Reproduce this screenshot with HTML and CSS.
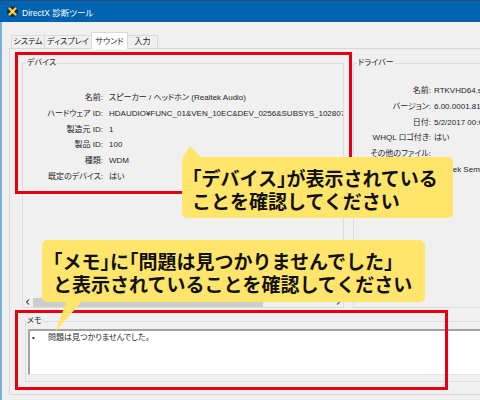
FILE: index.html
```html
<!DOCTYPE html>
<html lang="ja">
<head>
<meta charset="utf-8">
<title>DirectX 診断ツール</title>
<link rel="stylesheet" href="styles.css">
</head>
<body>
<div class="titlebar">
  <svg class="app-icon" width="11" height="11" viewBox="0 0 11 11">
    <circle cx="5.5" cy="5.5" r="5.5" fill="#1c2b63"/>
    <path d="M2.5 2.5 L8.5 8.5 M8.5 2.5 L2.5 8.5" stroke="#f3d21a" stroke-width="2.4" stroke-linecap="round"/>
    <circle cx="5.5" cy="5.5" r="1" fill="#fff6b0"/>
  </svg>
  <span class="title">DirectX 診断ツール</span>
</div>
<div class="client">
  <div class="tabs">
    <div class="tab w-sys">システム</div>
    <div class="tab w-disp">ディスプレイ</div>
    <div class="tab tab-active w-snd">サウンド</div>
    <div class="tab w-in">入力</div>
  </div>
  <div class="panel">
    <div class="top">
      <fieldset class="grp">
        <legend>デバイス</legend>
        <div class="grp-body">
          <div class="kv kv-dev">
            <span class="k">名前:</span><span class="v">スピーカー / ヘッドホン (Realtek Audio)</span>
            <span class="k">ハードウェア ID:</span><span class="v">HDAUDIO¥FUNC_01&amp;VEN_10EC&amp;DEV_0256&amp;SUBSYS_10280787&amp;REV_1000</span>
            <span class="k">製造元 ID:</span><span class="v">1</span>
            <span class="k">製品 ID:</span><span class="v">100</span>
            <span class="k">種類:</span><span class="v">WDM</span>
            <span class="k">既定のデバイス:</span><span class="v">はい</span>
          </div>
          <div class="hscroll">
            <svg class="arrow" width="10" height="10" viewBox="0 0 10 10"><path d="M6 2.5 L3.5 5 L6 7.5" fill="none" stroke="#606060" stroke-width="1.2"/></svg>
            <div class="thumb"></div>
            <div class="track"></div>
            <svg class="arrow" width="10" height="10" viewBox="0 0 10 10"><path d="M4 2.5 L6.5 5 L4 7.5" fill="none" stroke="#606060" stroke-width="1.2"/></svg>
          </div>
        </div>
      </fieldset>
      <fieldset class="grp">
        <legend>ドライバー</legend>
        <div class="grp-body">
          <div class="kv kv-drv">
            <span class="k">名前:</span><span class="v">RTKVHD64.sys</span>
            <span class="k">バージョン:</span><span class="v">6.00.0001.8146 (English)</span>
            <span class="k">日付:</span><span class="v">5/2/2017 00:00:00</span>
            <span class="k">WHQL ロゴ付き:</span><span class="v">はい</span>
            <span class="k">その他のファイル:</span><span class="v"></span>
            <span class="k">プロバイダー:</span><span class="v">Realtek Semiconductor Corp.</span>
          </div>
        </div>
      </fieldset>
    </div>
    <fieldset class="grp memo">
      <legend>メモ</legend>
      <div class="memo-box">
        <span class="bullet">•</span><span>問題は見つかりませんでした。</span>
      </div>
    </fieldset>
  </div>
</div>

<div class="mark mark-dev"></div>
<div class="mark mark-memo"></div>
<div class="bubble bubble-dev">「デバイス」が表示されている<br>ことを確認してください</div>
<div class="bubble bubble-memo">「メモ」に「問題は見つかりませんでした」<br>と表示されていることを確認してください</div>
</body>
</html>
```

FILE: styles.css
```css
html, body {
  margin: 0;
  padding: 0;
}
body {
  width: 480px;
  height: 400px;
  overflow: hidden;
  position: relative;
  background: #f0f0f0;
  font-family: "Liberation Sans", "Noto Sans CJK JP", sans-serif;
  font-size: 8px;
  font-feature-settings: "palt";
  color: #1e1e1e;
}

/* title bar */
.titlebar {
  height: 22px;
  box-sizing: border-box;
  background: #0063b1;
  border-top: 1px solid #24487a;
  display: flex;
  align-items: center;
  gap: 4px;
  padding-left: 7px;
  color: #fff;
  font-size: 8.5px;
}
.app-icon {
  display: block;
}

/* client area */
.client {
  height: 378px;
  box-sizing: border-box;
  border-left: 2px solid #7aaee2;
  padding: 10px 0 0 7px;
}

.tabs {
  display: flex;
  align-items: flex-end;
  height: 16px;
  margin-left: 2px;
}
.tab {
  height: 13px;
  box-sizing: border-box;
  border: 1px solid #d9d9d9;
  border-bottom: 0;
  margin-left: -1px;
  background: #f0f0f0;
  line-height: 12px;
  text-align: center;
  white-space: nowrap;
}
.tab-active {
  height: 17px;
  margin-bottom: -1px;
  padding-top: 3px;
  background: #fff;
  position: relative;
  z-index: 1;
}
.w-sys { width: 34px; margin-left: 0; }
.w-disp { width: 48px; }
.w-snd { width: 37px; }
.w-in { width: 31px; }

.panel {
  height: 347px;
  box-sizing: border-box;
  border: 1px solid #d9d9d9;
  border-right: 0;
  padding: 9px 0 0 12px;
}

.top {
  display: grid;
  grid-template-columns: 322px 200px;
  column-gap: 9px;
}

.grp {
  margin: 0;
  padding: 0;
  border: 1px solid #dcdcdc;
  min-width: 0;
}
.grp legend {
  margin-left: 3px;
  padding: 0 1px;
  line-height: 10px;
  font-size: 8px;
}
.grp-body {
  height: 239px;
  display: flex;
  flex-direction: column;
  overflow: hidden;
}

.kv {
  display: grid;
  line-height: 15.8px;
  white-space: nowrap;
}
.kv .k {
  text-align: right;
}
.kv-dev {
  grid-template-columns: 80px auto;
  column-gap: 6px;
  padding-top: 22px;
}
.kv-drv {
  grid-template-columns: 77px auto;
  column-gap: 3px;
  padding-top: 15px;
}

.hscroll {
  margin-top: auto;
  height: 10px;
  display: flex;
  align-items: stretch;
}
.arrow {
  flex: none;
  display: block;
}
.thumb {
  width: 230px;
  margin-top: 1px;
  background: #cdcdcd;
}
.track {
  flex: 1;
}

/* memo */
.memo {
  margin: 8px 0 0 3px;
  padding: 0 0 6px 0;
  width: 520px;
}
.memo legend {
  margin-left: 1px;
  padding: 0;
}
.memo-box {
  margin: 3px 0 0 2px;
  height: 46px;
  box-sizing: border-box;
  background: #fff;
  border-top: 2px solid #a3a3a3;
  border-left: 2px solid #a3a3a3;
  border-bottom: 1px solid #e6e6e6;
  padding: 2px 0 0 2px;
  line-height: 10px;
  display: flex;
}
.bullet {
  width: 16px;
  flex: none;
}

/* annotation overlays */
.mark {
  position: absolute;
  border: 3px solid #e60012;
  box-sizing: border-box;
}
.mark-dev {
  left: 15px;
  top: 52px;
  width: 337px;
  height: 142px;
}
.mark-memo {
  left: 15px;
  top: 310px;
  width: 433px;
  height: 80px;
}

.bubble {
  position: absolute;
  box-sizing: border-box;
  background: #ffe56c;
  border-radius: 5px;
  font-family: "Noto Sans CJK JP", sans-serif;
  font-size: 19px;
  font-weight: 700;
  line-height: 23px;
  color: #111;
  font-feature-settings: "halt";
  white-space: nowrap;
}
.bubble::before {
  content: "";
  position: absolute;
  background: #ffe56c;
}
.bubble-dev {
  left: 182px;
  top: 157px;
  width: 271px;
  height: 61px;
  padding: 8.5px 0 0 10px;
}
.bubble-dev::before {
  left: 0;
  top: -11px;
  width: 20px;
  height: 12px;
  clip-path: polygon(8px 0, 0 100%, 20px 100%);
}
.bubble-memo {
  left: 42px;
  top: 240px;
  width: 383px;
  height: 62px;
  padding: 8.5px 0 0 11px;
}
.bubble-memo::before {
  left: 13px;
  top: 60px;
  width: 28px;
  height: 32px;
  clip-path: polygon(12px 0, 28px 0, 0 100%);
}
```
